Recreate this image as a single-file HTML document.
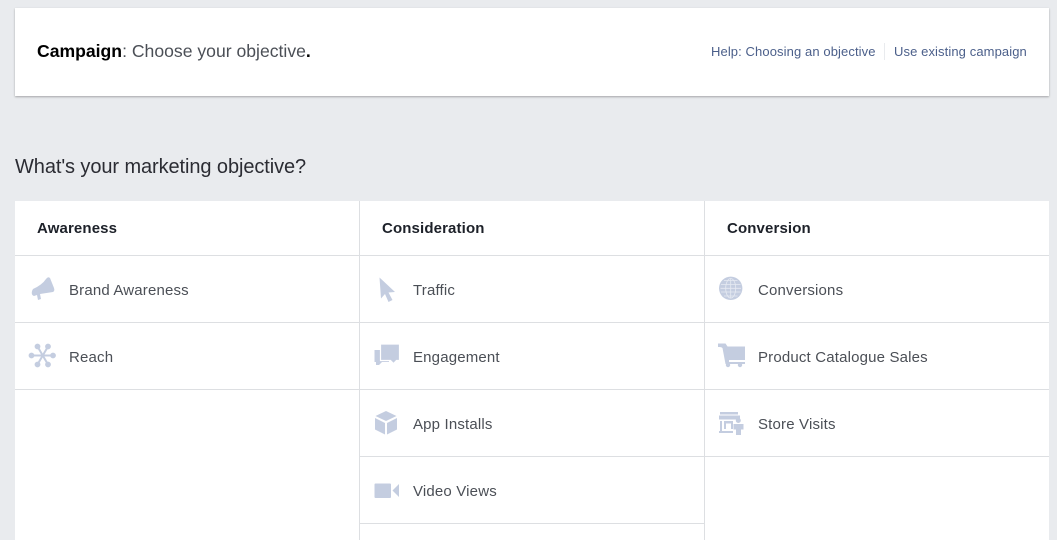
<!DOCTYPE html>
<html>
<head>
<meta charset="utf-8">
<style>
html,body{margin:0;padding:0;width:1057px;height:540px;overflow:hidden;background:#e9ebee;font-family:"Liberation Sans",Arial,sans-serif}
.a{position:absolute;white-space:nowrap}
.card{left:15px;top:8px;width:1034px;height:88px;background:#fff;box-shadow:0 1px 2px rgba(0,0,0,.3)}
.link{font-size:13px;line-height:16px;color:#4b5f8a;letter-spacing:.1px;top:44px}
.h{font-size:15px;line-height:18px;font-weight:bold;color:#1d2129;top:220px;letter-spacing:.13px}
.t{font-size:15px;line-height:18px;color:#4b4f56;letter-spacing:.17px}
.hl{height:1px;background:#dddfe2}
.vl{width:1px;background:#dddfe2;top:201px;height:339px}
svg{position:absolute;overflow:visible}
svg .f{fill:#c4cde0}
</style>
</head>
<body>
<div class="a card"></div>
<div class="a" style="left:37px;top:41px;font-size:17.6px;line-height:20px;color:#4b4f56"><b style="color:#000">Campaign</b>: Choose your objective<b style="color:#000">.</b></div>
<div class="a link" style="left:711px">Help: Choosing an objective</div>
<div class="a" style="left:884px;top:43px;width:1px;height:17px;background:#e9ebee"></div>
<div class="a link" style="left:894px">Use existing campaign</div>
<div class="a" style="left:15px;top:155px;font-size:20px;line-height:24px;color:#2b2c33;letter-spacing:-.09px">What's your marketing objective?</div>

<div class="a" style="left:15px;top:201px;width:1034px;height:339px;background:#fff"></div>
<div class="a vl" style="left:359px"></div>
<div class="a vl" style="left:704px"></div>
<div class="a hl" style="left:15px;top:255px;width:1034px"></div>
<div class="a hl" style="left:15px;top:322px;width:1034px"></div>
<div class="a hl" style="left:15px;top:389px;width:1034px"></div>
<div class="a hl" style="left:360px;top:456px;width:689px"></div>
<div class="a hl" style="left:360px;top:523px;width:344px"></div>

<div class="a h" style="left:37px">Awareness</div>
<div class="a h" style="left:382px">Consideration</div>
<div class="a h" style="left:727px">Conversion</div>

<div class="a t" style="left:69px;top:282px">Brand Awareness</div>
<div class="a t" style="left:69px;top:349px">Reach</div>
<div class="a t" style="left:413px;top:282px">Traffic</div>
<div class="a t" style="left:413px;top:349px">Engagement</div>
<div class="a t" style="left:413px;top:416px">App Installs</div>
<div class="a t" style="left:413px;top:483px">Video Views</div>
<div class="a t" style="left:758px;top:282px">Conversions</div>
<div class="a t" style="left:758px;top:349px">Product Catalogue Sales</div>
<div class="a t" style="left:758px;top:416px">Store Visits</div>

<svg style="left:0;top:0" width="1057" height="540">
<!-- Megaphone -->
<path class="f" d="M32 291 Q31 295 34 296 L37 295 L38 300 L41 299 L40 294 L53 292 Q55 291 54 288 L50 278 Q48 276 46 279 Q42 285 33 289 Z"/>

<!-- Reach -->
<path fill="none" stroke="#c4cde0" stroke-width="2" d="M31.500 355.500H53M37.500 346.500L48 364.500M48 346.500L37.500 364.500"/>
<circle class="f" cx="31.500" cy="355.500" r="2.900"/><circle class="f" cx="53" cy="355.500" r="2.900"/>
<circle class="f" cx="37.500" cy="346.500" r="2.900"/><circle class="f" cx="48" cy="346.500" r="2.900"/>
<circle class="f" cx="37.500" cy="364.500" r="2.900"/><circle class="f" cx="48" cy="364.500" r="2.900"/>

<!-- Cursor -->
<path class="f" d="M379.500 277.500 L395 292 L388.500 292.500 L392.500 300 L388.500 302 L385 294 L381 298.500 Z"/>

<!-- Engagement -->
<path class="f" d="M374.500 350 H389 V362 H382 L379 365 H376 V362 H374.500 Z"/>
<path class="f" stroke="#fff" stroke-width="1.200" d="M380.500 344 H399.500 V360.500 H396.500 L393.500 363.500 L390.500 360.500 H380.500 Z"/>

<!-- Box -->
<path class="f" d="M386 411 L396.500 416 L386 421 L375.500 416 Z"/>
<path class="f" d="M375 418 L385 423 V434.500 L375 429.500 Z"/>
<path class="f" d="M397 418 L387 423 V434.500 L397 429.500 Z"/>

<!-- Video -->
<rect class="f" x="374.500" y="483.500" width="16.500" height="14.500" rx="1"/>
<path class="f" d="M392.500 490.500 L399 484 V497 Z"/>

<!-- Globe -->
<circle class="f" cx="730.700" cy="288.300" r="11.700"/>
<g fill="none" stroke="#e6eaf2" stroke-width=".8">
<path d="M721 284.500H740.500M720.500 288.300H741M721 292H740.500M724 280.500H737.500M724 296H737.500M730.700 278.500V298"/>
<ellipse cx="730.700" cy="288.300" rx="5" ry="9.800"/>
</g>

<!-- Cart -->
<path class="f" d="M718 343.500 H725.500 L727.500 346.500 H745 V360 H729 V362 H745 V364 H725.500 L722.500 348 Q721.500 347 719.500 347 H718 Z"/>
<circle class="f" cx="728" cy="365" r="2.200"/><circle class="f" cx="740" cy="365" r="2.200"/>

<!-- Store -->
<rect class="f" x="720" y="412" width="18" height="2.500"/>
<rect class="f" x="719" y="415.500" width="21" height="4"/>
<path class="f" d="M720 421 H722 V431 H733 V433 H719 V431 H720 Z"/>
<path class="f" d="M724 421 H733 V429 H731 V423.500 H726 V429 H724 Z"/>
<circle class="f" cx="738.300" cy="420.500" r="2.500"/>
<path class="f" d="M733.500 424 H743.500 V429.500 H741 V435 H736 V429.500 H733.500 Z"/>
</svg>
</body>
</html>
